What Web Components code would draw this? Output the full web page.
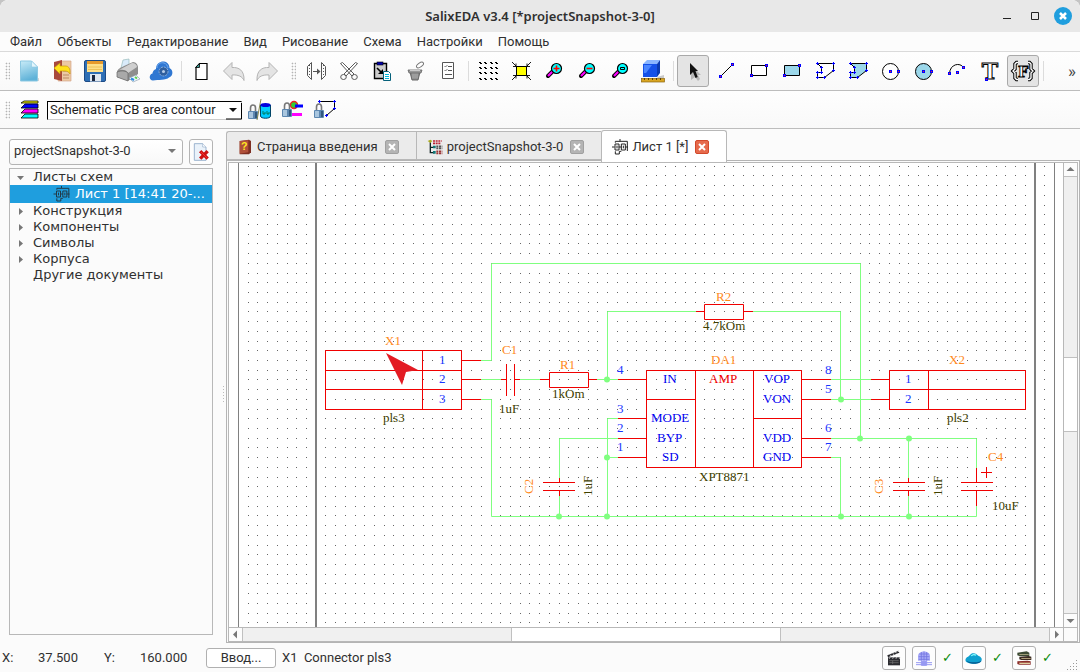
<!DOCTYPE html>
<html lang="ru">
<head>
<meta charset="utf-8">
<title>SalixEDA v3.4 [*projectSnapshot-3-0]</title>
<style>
html, body { height: 100%; margin: 0; }
body { background: #c4c4c4; font: 13px/16px Roboto, "Noto Sans", sans-serif; color: #303030; }
</style>
</head>
<body>
<script>
const define = (name, css, html, init) => {
  const tpl = document.createElement('template');
  tpl.innerHTML = `<style>*{box-sizing:border-box}button,select{font:inherit;color:inherit;margin:0}${css}</style>${html}`;
  customElements.define(name, class extends HTMLElement {
    connectedCallback() {
      if (this.shadowRoot) return;
      const root = this.attachShadow({ mode: 'open' });
      root.append(tpl.content.cloneNode(true));
      if (init) init.call(this, root);
    }
  });
};

/* ---------- icons, all on a 24 x 24 grid ---------- */
const node = (x, y) => `<rect x="${x - 1}" y="${y - 1}" width="3" height="3" fill="#00f"/><rect x="${x}" y="${y}" width="1" height="1" fill="#f22"/>`;
const dot = (x, y) => `<rect x="${x - 1}" y="${y}" width="3" height="1" fill="#00f"/><rect x="${x}" y="${y - 1}" width="1" height="3" fill="#00f"/>`;
const lock = (x, y) => `<path d="M${x + 2.5} ${y + 8}v-4a2.5 3 0 0 1 5 0v4" fill="none" stroke="#777" stroke-width="1.6"/><rect x="${x}" y="${y + 7}" width="10" height="8" rx="1" fill="#5d87b0"/><path d="M${x + 1} ${y + 8}h4v6h-4z" fill="#a9c6df"/><path d="M${x + 7} ${y + 8}h2v6h-2z" fill="#32587d"/>`;
const magnifier = inner => `<path d="M6 17l5-5" stroke="#000" stroke-width="4" stroke-linecap="round"/><path d="M6 17l5-5" stroke="#f0f" stroke-width="2.2"/><circle cx="14.5" cy="9.500" r="5" fill="#0ff" stroke="#000" stroke-width="1.200"/>${inner}`;
const polyPath = 'M4.500 4.500H20.500V11.500L11.500 18.500H4.500V13.500H8.500V8.500Z';
const polyNodes = dot(4, 4) + dot(20, 4) + dot(20, 11) + dot(11, 18) + dot(4, 18) + dot(4, 13) + dot(8, 13) + dot(8, 8);
const arrowBack = 'M1.500 12L10 3.500V8.500C17 8 22.500 11.500 22 21.500C20.500 17.500 16 15.500 10 16V20.500Z';
const braces = 'M7 3.500H5.500L4 5V10L2 12L4 14V19L5.500 20.500H7M17 3.500H18.500L20 5V10L22 12L20 14V19L18.500 20.500H17';
const icons = {
  new: `<defs><linearGradient id="n" x2="0.300" y2="1"><stop offset="0" stop-color="#c8ebf7"/><stop offset="1" stop-color="#5fb2d8"/></linearGradient></defs><path d="M5 22h17v-3z" fill="#bbb" opacity=".6"/><path d="M3.500 2h11l6 6v14h-17z" fill="url(#n)" stroke="#8cc8e2"/><path d="M14.500 2v6h6z" fill="#e4f6fc" stroke="#8cc8e2" stroke-width=".6"/>`,
  open: `<path d="M10 2h11v20H8z" fill="#ecc9a4" stroke="#d5a78c" stroke-width=".7"/><path d="M4 3l8-2v21l-8-2z" fill="#a8493c"/><path d="M13 12h6m-6 4h6m-6 3h6" stroke="#b98a66"/><path d="M4 9l6-5v3h6c2 0 4 2 4 5v3c-1-2-3-3-5-3h-5v3z" fill="#ffe21c" stroke="#c89a10" stroke-width=".7"/>`,
  save: `<rect x="1.500" y="1.500" width="21" height="21" rx="1.500" fill="#2f6fb5" stroke="#1d4b86"/><rect x="4" y="2" width="16" height="11" fill="#ffe08a"/><rect x="4" y="2" width="16" height="3" fill="#e79a2c"/><path d="M5 8h14m-14 2.500h14" stroke="#eec25a"/><rect x="7" y="15" width="11" height="7.500" fill="#dfe7f0"/><rect x="9" y="16" width="3" height="6" fill="#1a2740"/>`,
  print: `<path d="M5 9l2-8 6-1v8z" fill="#d9ebfa" stroke="#9bb" stroke-width=".7"/><path d="M1 13c0-3 5-5 7-6l9-4c3 0 5 3 5 5v7l-10 7L1 18z" fill="#8e8e8e"/><path d="M3 11l13-7c3 0 5 2 5 4l-9 6c-1-3-5-4-9-3z" fill="#cfcfcf"/><path d="M12 14v8L1 18v-5c5-2 9-1 11 1z" fill="#a9a9a9" stroke="#666" stroke-width=".7"/><path d="M13 19l7-3 4 4-7 3z" fill="#eef7fb" stroke="#89a" stroke-width=".6"/><path d="M15 19.500l3 1.500" stroke="#2c8be0" stroke-width="2"/><path d="M19 18l2 1.500" stroke="#5fd04a" stroke-width="2"/>`,
  cloud: `<path d="M4 21.500C0 21.500-.5 15.500 3.500 14.500C4 11 6 10.500 7 10C7 4 12 2 15 2.500C18.500 3 20.500 6 20.500 9C24.500 11 24.500 17 20 18.500C17 21.500 9 20.500 4 21.500Z" fill="#2f77d2"/><path d="M8 9c0-4 4-6 7-5 2 .5 4 3 4 5" fill="none" stroke="#6faaf0"/><circle cx="14.500" cy="12.500" r="4.500" fill="#2f5f9f" stroke="#8fb2dd" stroke-width="1" stroke-dasharray="2 1"/><circle cx="14.500" cy="12.500" r="1.500" fill="#b5cbe8"/>`,
  doc: `<path d="M10.500 4.500h7.500v16h-11v-12z" fill="#fff" stroke="#000" stroke-width="1.200"/><path d="M6.500 8.500h4v-4z" fill="#3c9a94" stroke="#000" stroke-width=".8"/>`,
  undo: `<path d="${arrowBack}" fill="#e4e4e4" stroke="#b4b4b4"/>`,
  redo: `<g transform="matrix(-1 0 0 1 24 0)"><path d="${arrowBack}" fill="#e4e4e4" stroke="#b4b4b4"/></g>`,
  pins: `<g fill="none" stroke="#555"><path d="M7.500 3.500v17M7.500 3.500l-4 4v9l4 4M17.500 3.500v17M17.500 3.500l4 4v9l-4 4"/><path d="M5.500 6v13M19.500 6v13" stroke-dasharray="1 2"/><path d="M9 12.500h5"/></g><path d="M13 9.500l3.500 3-3.500 3z" fill="#555"/>`,
  cut: `<g fill="none" stroke="#5a5a5a"><path d="M3.500 4.500L15 17l2-2L5.500 3.500zM20.500 4.500L9 17l-2-2L18.500 3.500z" fill="#fff"/><ellipse cx="6.500" cy="18" rx="2.800" ry="2.500"/><ellipse cx="17.500" cy="18" rx="2.800" ry="2.500"/></g>`,
  paste: `<path d="M4.500 4.500h12v15h-12z" fill="#ccc" stroke="#000" stroke-width="1.400"/><rect x="7" y="3" width="6" height="3" fill="#00a" stroke="#000" stroke-width=".6"/><path d="M7 9l5 5" stroke="#000" stroke-width="1.600"/><path d="M13 10v5H8z"/><path d="M13.500 12.500h5l2 2v7h-7z" fill="#fff" stroke="#05607a"/><path d="M15 15.500h4m-4 2h4m-4 2h4" stroke="#0bd"/>`,
  trash: `<path d="M7 13h10l-2 8H9z" fill="#8a8a8a" stroke="#666"/><path d="M5 11h14l-1 3H6z" fill="#999" stroke="#666" stroke-width=".8"/><path d="M7 11.500h10" stroke="#ccc"/><path d="M10 14.500v5m2-5v5m2-5v5" stroke="#bbb" stroke-width=".8"/><ellipse cx="17" cy="6" rx="4" ry="2" transform="rotate(-35 17 6)" fill="#fff" stroke="#777"/>`,
  list: `<path d="M6.500 3.500h11v16h-11z" fill="#fff" stroke="#555"/><path d="M12 7.500h4M12 11.500h4M9 15.500h7" stroke="#555"/><path d="M8.500 7l1 1 2-2M8.500 11l1 1 2-2" fill="none" stroke="#555" stroke-width=".8"/>`,
  grid: [3, 8, 13, 19].map(y => [4, 9, 15, 20].map(x => `<path d="M${x - 1} ${y}h2v1h1v1h-2v-1h-1z"/>`).join('')).join(''),
  fit: `<rect x="7.500" y="7.500" width="10" height="9" fill="#ff0" stroke="#000"/><path d="M3 3l4 4m-3 .5h3v-3M22 3l-4 4m3 .5h-3v-3M3 21l4-4m-3-.5h3v3M22 21l-4-4m3-.5h-3v3" fill="none" stroke="#000" stroke-width=".9"/>`,
  zoomin: magnifier('<path d="M11.500 9.500h6m-3-3v6" stroke="#f00" stroke-width="1.600"/>'),
  zoomout: magnifier('<path d="M11.500 9.500h6" stroke="#f00" stroke-width="1.600"/>'),
  zoomfit: magnifier('<path d="M12.500 8.500h4v2h-4z" fill="none" stroke="#000"/>'),
  cube: `<path d="M16 18l7-2v3h-6z" fill="#aaa" opacity=".6"/><path d="M2 5l4-4h13l-3 4z" fill="#8ab6ff"/><path d="M16 5l3-4v13l-3 4z" fill="#0b3bb0"/><rect x="2" y="5" width="14" height="13" fill="#1551e8"/><path d="M3 6h8l-6 8H3z" fill="#4a86ff"/><rect x=".5" y="19.500" width="23" height="3.500" fill="#d9a521" stroke="#8a6410" stroke-width=".7"/><path d="M3.500 19v2m4-2v2m4-2v2m4-2v2m4-2v2" stroke="#5c4208"/>`,
  select: `<path d="M10 6v15l4-3 3 4 2-2-2-4h3z" fill="#999" opacity=".6"/><path d="M9 4v12l3-3 2.500 6 2.200-1L14.500 12H17z" fill="#111"/>`,
  line: `<path d="M6.500 17.500l12-12" stroke="#000"/>${node(6, 17)}${node(18, 5)}`,
  rect: `<path d="M4.500 6.500h15v10h-15z" fill="#fff" stroke="#000"/>${node(4, 16)}${node(19, 6)}`,
  rectfill: `<path d="M4.500 6.500h15v10h-15z" fill="#9bd7ea" stroke="#000"/>${node(4, 16)}${node(19, 6)}`,
  poly: `<path d="${polyPath}" fill="#fff" stroke="#000"/>${polyNodes}`,
  polyfill: `<path d="${polyPath}" fill="#9bd7ea" stroke="#000"/>${polyNodes}`,
  circle: `<circle cx="11.500" cy="12.500" r="8" fill="#fff" stroke="#000"/>${node(11, 12)}${node(19, 12)}`,
  circlefill: `<circle cx="11.500" cy="12.500" r="8" fill="#9bd7ea" stroke="#000"/>${node(11, 12)}${node(19, 12)}`,
  arc: `<path d="M4.500 14.500C5 5 15 3 18.500 8.500" fill="none" stroke="#000"/>${node(4, 14)}${node(12, 13)}${node(18, 8)}`,
  text: `<text x="12" y="20" text-anchor="middle" font-family="DejaVu Serif, serif" font-weight="700" font-size="22" fill="#fff" stroke="#000">T</text>${node(8, 20)}`,
  field: `<path d="${braces}" fill="none" stroke="#000" stroke-width="3.400"/><path d="${braces}" fill="none" stroke="#fff" stroke-width="1.400"/><text x="12" y="18" text-anchor="middle" font-family="DejaVu Serif, serif" font-weight="700" font-size="15" fill="#fff" stroke="#000" stroke-width=".9">F</text>`,
  layers: `<g stroke="#000" stroke-width=".8"><path d="M4 20l4-4h13v4z" fill="#0ff"/><path d="M4 15l4-4h13v4z" fill="#f0f"/><path d="M4 10l4-4h13v4z" fill="#00f"/><path d="M4 5l3-2h14v2z" fill="#ff0"/></g>`,
  lockdata: `${lock(1, 6)}<path d="M10 22L14 1" stroke="#8a8a50"/><path d="M13.500 7v11c0 3 10 3 10 0v-11z" fill="#0cf" stroke="#046"/><ellipse cx="18.500" cy="7" rx="5" ry="2" fill="#00d"/><path d="M16 13v3h2v-2m2-1v3h2v-2" fill="none" stroke="#063" stroke-width=".8"/>`,
  locklayer: `<circle cx="14" cy="7" r="3.500" fill="#3c3" stroke="#e22" stroke-width="1.400"/><path d="M15 8h8" stroke="#00f" stroke-width="3"/><path d="M12 16.500h10" stroke="#f0f" stroke-width="3"/>${lock(2, 4)}`,
  lockpoly: `<path d="M6.500 3.500h15v7l-8 7" fill="none" stroke="#000"/>${dot(6, 3)}${dot(21, 3)}${dot(21, 10)}${dot(13, 17)}${lock(1, 5)}`,
  remove: `<path d="M4 2h10l4 4v16H4z" fill="#eaf2fa" stroke="#8ba7c6"/><path d="M14 2v4h4" fill="#fff" stroke="#8ba7c6" stroke-width=".7"/><path d="M11 11l9 9m0-9l-9 9" stroke="#c11" stroke-width="4"/><path d="M12 12l7 7" stroke="#f33"/>`,
  sheet: `<g fill="none" stroke="currentColor" stroke-width="1.500"><path d="M0 12h4m6 0h4m6 0h4M4.500 7.500h6v9h-6zM14 7.500h6v9h-6zM5 5.500V3.500h7V0M12 3.500h11V18M5 18.500v4h6v-4h3"/><path d="M7.500 10v4m9.500-4v4"/></g>`,
  book: `<path d="M4 3l14-2 3 2v17l-3 3H4z" fill="#7d2f22"/><path d="M4 3l13-1v18l-13 2z" fill="#b0503a"/><text x="11" y="17" text-anchor="middle" font-family="Liberation Sans, sans-serif" font-weight="700" font-size="16" fill="#ffe820">?</text>`,
  tree: `<g stroke-width="2.500" stroke-dasharray="3 1" fill="none"><path d="M9 3h13M9 6.500h12" stroke="#b23"/><path d="M14 11h9M14 14h9" stroke="#555"/><path d="M14 18.500h9M14 21.500h9" stroke="#933"/></g><path d="M5 5v15.500H11M5 12.500H11" fill="none" stroke="#122" stroke-width="2"/><path d="M1 3l4-2 3 2-3 3z" fill="#aa2"/><path d="M9 10h4v4H9zM9 18h4v4H9z" fill="#177"/>`,
  clapper: `<path d="M3 11h18v12H3z" fill="#2b2b30"/><path d="M2 8L19 1l1 3-17 7z" fill="#2b2b30"/><path d="M6 7l2 2m2-4l2 2m2-4l2 2m2-4l1 2M6 11l-1 2m6-2l-1 2m6-2l-1 2m6-2l-1 2" stroke="#ddd" stroke-width="1.500"/><path d="M5 16h14m-14 3h14M10 16v5" stroke="#777"/>`,
  globe: `<path d="M3 16V9c0-9 18-9 18 0v7z" fill="#a9abf8"/><path d="M4 10h16M12 2v14M5 6h14M4 14h16M8 3v13M16 3v13" stroke="#7476e0" stroke-width="1.200"/><path d="M0 19h24M0 22h24M8 17h8v6H8z" stroke="#9698f2" stroke-width="1.500" fill="#9698f2"/>`,
  cloudsm: `<path d="M3 19c-5-1-5-7 0-9 3-1 3-5 8-5 4 0 6 3 8 4 6 2 6 8 1 10-4 2-13 2-17 0z" fill="#0fa0cf"/><path d="M8 9c2-3 6-2 7-1" stroke="#8ff" stroke-width="2" fill="none"/><path d="M1 16c5 3 17 3 22 0-1 6-20 6-22 0z" fill="#055a90"/>`,
  books: `<path d="M2 17l15-1 5 1v5H5l-3-1z" fill="#8c2f2c"/><path d="M5 19h16v2H5z" fill="#e0cfa0"/><path d="M5 10l14-1 4 1v5H8l-3-1z" fill="#3a2a20"/><path d="M8 12h14v1H8z" fill="#e8d8a8"/><path d="M2 4l14-2 4 2v5H5L2 8z" fill="#3c4a34"/><path d="M5 6h14v1H5z" fill="#cfc79a"/>`
};
define('eda-icon', `:host{display:block;width:24px;height:24px;flex:none}svg{display:block;width:100%;height:100%;overflow:visible}`,
  `<svg viewBox="0 0 24 24" aria-hidden="true"></svg>`,
  function (root) { root.querySelector('svg').innerHTML = icons[this.getAttribute('name')]; });

/* ---------- window chrome ---------- */
define('title-bar', `
:host{display:grid;grid-template-columns:1fr auto 1fr;align-items:center;height:32px;flex:none;background:#e8e8e8;border-radius:8px 8px 0 0;box-sizing:border-box}
h1{grid-column:2;margin:0;font:600 13px/18px "Noto Sans",sans-serif;color:#303030}
div{display:flex;justify-content:flex-end;gap:8px;padding-right:8px}
button{width:20px;height:18px;padding:0;border:0;background:none;border-radius:9px}
button.close{width:18px;background:#1f9ede}
svg{display:block;width:100%;height:18px}`,
`<h1><slot></slot></h1><div>
<button aria-label="Свернуть"><svg viewBox="0 0 20 18"><path d="M5 11.500h8" stroke="#222"/></svg></button>
<button aria-label="Развернуть"><svg viewBox="0 0 20 18"><path d="M5.500 5.500h7v7h-7z" fill="none" stroke="#222"/></svg></button>
<button class="close" aria-label="Закрыть"><svg viewBox="0 0 18 18"><path d="M6 6l6 6m0-6l-6 6" stroke="#fff" stroke-width="2.500"/></svg></button></div>`);

define('menu-bar', `:host{display:flex;flex:none;height:20px;padding-left:3px;background:#fcfcfc;border-bottom:1px solid #dadada;box-sizing:border-box}
::slotted(menu-item){flex:none}`, `<slot></slot>`);
define('menu-item', `:host{display:block}button{height:19px;border:0;padding:0 8px 0 7px;background:none;line-height:19px}`, `<button><slot></slot></button>`);

define('tool-bar', `:host{display:flex;align-items:center;gap:1px;flex:none;height:39px;background:linear-gradient(#fefefe,#f9f9f9);border-bottom:1px solid #bdbdbd;box-sizing:border-box;overflow:hidden}:host([compact]){height:38px;padding-top:1px}`, `<slot></slot>`);
define('tool-button', `:host{display:block;flex:none}
button{display:grid;place-items:center;width:32px;height:32px;padding:0;border:1px solid transparent;border-radius:3px;background:none}
:host([pressed]) button{background:#e4e4e4;border-color:#a9a9a9}`, `<button></button>`,
  function (root) {
    const b = root.querySelector('button');
    b.setAttribute('aria-label', this.getAttribute('label'));
    const icon = document.createElement('eda-icon');
    icon.setAttribute('name', this.getAttribute('icon'));
    b.append(icon);
  });
define('tool-handle', `:host{display:block;flex:none;width:12px;padding-left:5px;box-sizing:border-box}:host([inner]){width:15px;padding-left:7px}
i{display:block;width:5px;height:18px;background:radial-gradient(circle,#b4b4b4 40%,transparent 50%) 0 0/3px 3px}`, `<i></i>`);
define('tool-sep', `:host{display:block;flex:none;width:6px;height:20px;box-sizing:border-box}i{display:block;width:1px;height:20px;margin-left:3px;background:#dcdcdc}`, `<i></i>`);
define('tool-more', `:host{display:block;margin-left:auto;padding-right:4px}button{border:0;background:none;padding:0;font-size:17px;line-height:20px;color:#444}`, `<button aria-label="Ещё">»</button>`);

define('layer-select', `
:host{display:block;position:relative;margin:0 0 0 5px;width:195px;flex:none}
select{display:block;appearance:none;width:100%;height:19px;border:1px solid;border-color:#000 #ccc #ccc #000;border-radius:0;background:#fff;padding:0 18px 0 2px;color:#222;line-height:16px}
svg{position:absolute;right:0;top:1px;width:16px;height:18px;pointer-events:none}`,
`<select aria-label="Слой"><option>Schematic PCB area contour</option><option>Schematic wire</option></select>
<svg viewBox="0 0 16 18"><path d="M0 17h15.500V1" fill="none" stroke="#000"/><path d="M3 6h8l-4 4z" fill="#111"/></svg>`);

/* ---------- project panel ---------- */
define('project-panel', `
:host{display:flex;flex-direction:column;gap:3px;width:226px;flex:none;padding:10px 13px 8px 9px;box-sizing:border-box}
.top{display:flex;gap:6px;height:26px}
label{position:relative;flex:1;display:block}
select{display:block;appearance:none;width:100%;height:26px;border:1px solid #b4b4b4;border-radius:3px;background:linear-gradient(#fff,#f8f8f8);padding:0 20px 2px 4px}
label svg{position:absolute;right:7px;top:10px;width:8px;height:5px;pointer-events:none}
button{width:24px;height:26px;padding:0;display:grid;place-items:center;border:1px solid #b4b4b4;border-radius:3px;background:#fdfdfd}
button eda-icon{width:20px;height:20px}
`, `<div class="top"><label><select aria-label="Проект"><option>projectSnapshot-3-0</option></select><svg viewBox="0 0 8 5"><path d="M0 0h8L4 4z" fill="#777"/></svg></label>
<button aria-label="Закрыть проект"><eda-icon name="remove"></eda-icon></button></div><slot></slot>`);

define('project-tree', `:host{display:block;flex:1;border:1px solid #b8b8b8;background:#fbfbfb;font:13px/16px "DejaVu Sans",sans-serif;box-sizing:border-box;overflow:hidden}`, `<slot></slot>`);
define('tree-row', `
:host{display:flex;align-items:center;height:16px;padding-left:23px;white-space:nowrap}
:host([leaf]){height:18px;padding-left:43px;background:#1f9ede;color:#fff}
svg{width:7px;height:7px;flex:none;margin:0 9px 0 -16px;display:none}
:host([open]) svg,:host([closed]) svg{display:block}
:host([closed]) svg{transform:rotate(-90deg)}
eda-icon{display:none;width:17px;height:16px;margin-right:5px;color:#223a48}:host([leaf]) eda-icon{display:block}`,
`<svg viewBox="0 0 7 7"><path d="M0 2h7L3.500 6z" fill="#777"/></svg><eda-icon name="sheet"></eda-icon><slot></slot>`);

/* ---------- document tabs ---------- */
define('doc-tabs', `:host{display:flex;align-items:flex-end;height:30px;flex:none}`, `<slot></slot>`);
define('doc-tab', `
:host{display:flex;align-items:center;gap:7px;height:29px;padding:2px 17px 0 10px;background:#ebebeb;border:1px solid #b8b8b8;border-width:1px 0 1px 1px;box-sizing:border-box;white-space:nowrap}
:host(:first-child){border-radius:3px 0 0 0}
:host([active]){height:32px;margin-bottom:-2px;padding-top:0;background:#fff;border-width:1px 1px 0 1px;border-radius:3px 3px 0 0;position:relative;z-index:1}
eda-icon{width:16px;height:16px;color:#222}
button{border:0;padding:0;background:none;line-height:16px}
.t{display:flex;align-items:center;gap:4px}
.x{width:14px;height:14px;border-radius:2px;background:#b4b4b4;border:1px solid #a0a0a0}
:host([active]) .x{background:#e66a4c;border-color:#d2492b}
.x svg{display:block}`,
`<button class="t"><slot></slot></button><button class="x" aria-label="Закрыть вкладку"><svg width="12" height="12" viewBox="0 0 12 12"><path d="M3 3l6 6m0-6L3 9" stroke="#fff" stroke-width="2"/></svg></button>`,
  function (root) {
    const icon = document.createElement('eda-icon');
    icon.setAttribute('name', this.getAttribute('icon'));
    root.querySelector('.t').prepend(icon);
  });

/* ---------- scroll bars ---------- */
define('scroll-bar', `
:host{display:flex;background:#fcfcfc;box-sizing:border-box;border-left:1px solid #b8b8b8}
:host([horizontal]){border-left:0;border-top:1px solid #b8b8b8}
:host([vertical]){flex-direction:column}
button{width:13px;height:13px;padding:0;border:0;background:none;flex:none;display:grid;place-items:center}
svg{width:9px;height:9px}
.track{flex:1;display:flex;background:#f0f0f0;border:1px solid #c0c0c0}
:host([vertical]) .track{flex-direction:column;border-width:1px 0}
:host([horizontal]) .track{border-width:0 1px}
.thumb{background:#fff;border:1px solid #c0c0c0}
:host([vertical]) .thumb{border-width:1px 0}
:host([horizontal]) .thumb{border-width:0 1px}`,
`<button class="a" aria-label="Назад"><svg viewBox="0 0 9 9"><path/></svg></button><div class="track"><div class="before"></div><div class="thumb"></div><div class="after"></div></div><button class="b" aria-label="Вперёд"><svg viewBox="0 0 9 9"><path/></svg></button>`,
  function (root) {
    const v = this.hasAttribute('vertical');
    const [a, b] = root.querySelectorAll('path');
    a.setAttribute('d', v ? 'M0.500 6h8L4.500 2z' : 'M6 0.500v8L2 4.500z');
    b.setAttribute('d', v ? 'M0.500 3h8L4.500 7z' : 'M3 0.500v8L7 4.500z');
    [a, b].forEach(p => p.setAttribute('fill', '#777'));
    const parts = this.getAttribute('parts').split(' ');
    ['before', 'thumb', 'after'].forEach((c, i) => root.querySelector('.' + c).style.flex = parts[i] + ' 1 0');
  });

/* ---------- schematic ---------- */
const GRID = 9.715;
const wires = [
  'M481 360.500H491.500V263.500H860.500V438', 'M481 379.500H501M520 379.500H540M597 379.500H618',
  'M481 399.500H491.500V516.500H976.500V506', 'M607.500 379V311.500H696M753 311.500H840.500V399',
  'M618 418.500H607.500V516M618 457.500H607', 'M618 438.500H559.500V478M559.500 496V516',
  'M831 379.500H871M831 399.500H871', 'M831 438.500H976.500V468', 'M831 457.500H840.500V516',
  'M908.500 438V478M908.500 496V516'
];
const parts = [
  'M325.500 350.500H461.500V409.500H325.500ZM422.500 350V409M325 370.500H461M325 389.500H461M461 360.500H481M461 379.500H481M461 399.500H481',
  'M501 379.500H506M506.500 364V396M514.500 364V396M514 379.500H520',
  'M540 379.500H549M549.500 372.500H588.500V387.500H549.500ZM588 379.500H597',
  'M696 311.500H704M704.500 304.500H743.500V319.500H704.500ZM743 311.500H753',
  'M646.500 370.500H801.500V467.500H646.500ZM695.500 370V467M753.500 370V467M646 399.500H695M753 418.500H801',
  'M618 379.500H646M618 418.500H646M618 438.500H646M618 457.500H646M801 379.500H831M801 399.500H831M801 438.500H831M801 457.500H831',
  'M559.500 478V482M543 482.500H575M543 490.500H575M559.500 490V496',
  'M871 379.500H889M871 399.500H889M889.500 370.500H1025.500V409.500H889.500ZM928.500 370V409M889 389.500H1025',
  'M908.500 478V482M893 482.500H925M893 490.500H925M908.500 490V496',
  'M976.500 468V482M961 482.500H993M961 490.500H993M976.500 490V506M981 472.500H992M986.500 467V478'
];
const joints = [[607, 379], [841, 399], [607, 457], [860, 438], [909, 438], [559, 516], [607, 516], [841, 516], [909, 516]];
const labels = {
  '#ff8a1c': [['X1', 385, 345], ['C1', 502, 354], ['R1', 560, 369], ['R2', 716, 301], ['DA1', 711, 364], ['X2', 949, 364], ['C4', 988, 461], ['C2', 533, 494, 1], ['C3', 883, 494, 1]],
  '#404000': [['pls3', 383, 422], ['1uF', 499, 413], ['1kOm', 552, 398], ['4.7kOm', 703, 330], ['XPT8871', 699, 481], ['pls2', 947, 422], ['10uF', 992, 510], ['1uF', 592, 496, 1], ['1uF', 942, 496, 1]],
  '#0000f0': [['IN', 663, 383], ['MODE', 651, 422], ['BYP', 657, 442], ['SD', 662, 461], ['VOP', 764, 383], ['VON', 763, 403], ['VDD', 763, 442], ['GND', 763, 461]],
  '#1a36ff': [['1', 439, 364], ['2', 439, 383], ['3', 439, 403], ['4', 617, 374], ['3', 617, 413], ['2', 617, 432], ['1', 617, 451], ['8', 825, 374], ['5', 825, 393], ['6', 825, 432], ['7', 825, 451], ['1', 905, 383], ['2', 905, 403]],
  '#f00000': [['AMP', 709, 383]]
};
define('schematic-sheet', `:host{display:block;overflow:hidden;background:#fff;min-width:0;min-height:0}
svg{display:block;width:834px;height:464px;overflow:visible}
text{font:13px "Liberation Serif",serif}`,
`<svg viewBox="229 163 834 464" role="img" aria-label="Схема"></svg>`,
  function (root) {
    let dots = '';
    for (let j = 0; j < 48; j++) {
      for (let i = 0; i < 83; i++) {
        const x = Math.floor(248.2 + i * GRID), y = Math.floor(166.25 + j * GRID);
        if (x >= 314 && x <= 317 || x >= 1033 && x <= 1036) continue;
        dots += `M${x} ${y}h1v1h-1z`;
      }
    }
    let s = `<g fill="#808080"><path d="M238 163h1v600h-1zM315 163h2v600h-2zM1034 163h2v600h-2zM1054 163h1v600h-1z"/></g><path d="${dots}" fill="#666"/>`;
    s += `<path d="${wires.join('')}" fill="none" stroke="#80ff80"/>`;
    s += `<path d="${parts.join('')}" fill="none" stroke="#f00000"/>`;
    s += joints.map(([x, y]) => `<circle cx="${x}" cy="${y + .5}" r="3" fill="#80ff80"/>`).join('');
    for (const color in labels)
      s += `<g fill="${color}">` + labels[color].map(([t, x, y, up]) => up ? `<text transform="translate(${x} ${y}) rotate(-90)">${t}</text>` : `<text x="${x}" y="${y}">${t}</text>`).join('') + '</g>';
    s += '<path d="M386 353L418 370L406 372L402 385Z" fill="#e31b23"/>';
    root.querySelector('svg').innerHTML = s;
  });

define('doc-frame', `
:host{display:grid;flex:1;min-height:0;border:1px solid #b4b4b4;padding:1px 1px 0;box-sizing:border-box;background:#fbfbfb}
.inner{display:grid;grid-template:minmax(0,1fr) 14px/minmax(0,1fr) 14px;border:1px solid #b8b8b8;min-height:0;min-width:0}
.corner{border:1px solid #b8b8b8;border-width:1px 0 0 1px}`,
`<div class="inner"><slot></slot><scroll-bar vertical parts="181 74 182"></scroll-bar><scroll-bar horizontal parts="269 270 269"></scroll-bar><div class="corner"></div></div>`);

define('split-handle', `:host{display:block;position:absolute;left:-3px;top:50%;width:1px;height:18px;background:linear-gradient(#bbb 1px,transparent 1px) 0 0/1px 3px repeat-y}`, ``);
define('work-area', `:host{display:flex;flex:1;min-height:0;background:#fbfbfb}section{position:relative;flex:1;display:flex;flex-direction:column;min-width:0;padding-top:1px}`,
  `<slot name="side"></slot><section><split-handle></split-handle><slot></slot></section>`);

/* ---------- status bar ---------- */
define('status-bar', `
:host{display:flex;align-items:center;height:29px;flex:none;padding:1px 0 0 2px;background:#fbfbfb;box-sizing:border-box}
dl{display:flex;margin:0}dt{width:24px}dd{margin:0;width:78px;padding-left:12px}
.enter{width:70px;height:20px;border:1px solid #b0b0b0;border-radius:3px;background:#fff;padding:0}
output{flex:1;padding-left:6px;white-space:pre}
.set{display:flex;align-items:center}
.set button{width:24px;height:24px;padding:0;display:grid;place-items:center;border:1px solid #b0b0b0;border-radius:3px;background:#fdfdfd}
.set button+button{margin-left:6px}
.set eda-icon{width:16px;height:16px}
.ok{width:26px;text-align:center;padding-right:3px;color:#0a8a0a;font:700 13px/16px "DejaVu Sans",sans-serif}
.grip{width:18px;height:24px;align-self:flex-end}`,
`<dl><dt>X:</dt><dd>37.500</dd><dt>Y:</dt><dd>160.000</dd></dl><button class="enter">Ввод...</button><output>X1  Connector pls3</output>
<div class="set"><button aria-label="Запись"><eda-icon name="clapper"></eda-icon></button><button aria-label="Сеть"><eda-icon name="globe"></eda-icon></button><span class="ok">✓</span>
<button aria-label="Облако"><eda-icon name="cloudsm"></eda-icon></button><span class="ok">✓</span>
<button aria-label="Библиотека"><eda-icon name="books"></eda-icon></button><span class="ok">✓</span></div>
<svg class="grip" viewBox="3 0 18 24"><path d="M17 12h1v1h-1zM14 15h1v1h-1zM17 15h1v1h-1zM11 18h1v1h-1zM14 18h1v1h-1zM17 18h1v1h-1zM8 21h1v1h-1zM11 21h1v1h-1zM14 21h1v1h-1zM17 21h1v1h-1z" fill="#999"/></svg>`);

define('eda-window', `:host{display:flex;flex-direction:column;height:100vh;overflow:hidden;border-radius:8px 8px 0 0;background:#fbfbfb}`, `<slot></slot>`);

/* ---------- application ---------- */
const tool = (icon, label, pressed) => `<tool-button icon="${icon}" label="${label}"${pressed ? ' pressed' : ''}></tool-button>`;
define('eda-app', `:host{display:block}tool-bar>eda-icon{margin-left:4px}`, `
<eda-window>
<title-bar>SalixEDA v3.4 [*projectSnapshot-3-0]</title-bar>
<menu-bar>${['Файл', 'Объекты', 'Редактирование', 'Вид', 'Рисование', 'Схема', 'Настройки', 'Помощь'].map(t => `<menu-item>${t}</menu-item>`).join('')}</menu-bar>
<tool-bar><tool-handle></tool-handle>
${tool('new', 'Новый')}${tool('open', 'Открыть')}${tool('save', 'Сохранить')}${tool('print', 'Печать')}${tool('cloud', 'Облако')}<tool-sep></tool-sep>
${tool('doc', 'Документ')}${tool('undo', 'Отменить')}${tool('redo', 'Повторить')}<tool-handle inner></tool-handle>
${tool('pins', 'Выводы')}${tool('cut', 'Вырезать')}${tool('paste', 'Вставить')}${tool('trash', 'Удалить')}${tool('list', 'Свойства')}<tool-sep></tool-sep>
${tool('grid', 'Сетка')}${tool('fit', 'Вписать')}${tool('zoomin', 'Увеличить')}${tool('zoomout', 'Уменьшить')}${tool('zoomfit', 'Окно')}${tool('cube', '3D')}<tool-sep></tool-sep>
${tool('select', 'Выбор', 1)}${tool('line', 'Линия')}${tool('rect', 'Прямоугольник')}${tool('rectfill', 'Заливка')}${tool('poly', 'Полигон')}${tool('polyfill', 'Полигон с заливкой')}${tool('circle', 'Круг')}${tool('circlefill', 'Круг с заливкой')}${tool('arc', 'Дуга')}${tool('text', 'Текст')}${tool('field', 'Поле', 1)}<tool-sep></tool-sep><tool-more></tool-more></tool-bar>
<tool-bar compact><tool-handle></tool-handle>
<eda-icon name="layers"></eda-icon><layer-select></layer-select>${tool('lockdata', 'Блокировка данных')}${tool('locklayer', 'Блокировка слоя')}${tool('lockpoly', 'Блокировка контура')}</tool-bar>
<work-area>
<project-panel slot="side"><project-tree>
<tree-row open>Листы схем</tree-row><tree-row leaf>Лист 1 [14:41 20-...</tree-row><tree-row closed>Конструкция</tree-row><tree-row closed>Компоненты</tree-row><tree-row closed>Символы</tree-row><tree-row closed>Корпуса</tree-row><tree-row>Другие документы</tree-row>
</project-tree></project-panel>
<doc-tabs><doc-tab icon="book">Страница введения</doc-tab><doc-tab icon="tree">projectSnapshot-3-0</doc-tab><doc-tab icon="sheet" active>Лист 1 [*]</doc-tab></doc-tabs>
<doc-frame><schematic-sheet></schematic-sheet></doc-frame>
</work-area>
<status-bar></status-bar>
</eda-window>`);
</script>
<eda-app></eda-app>
</body>
</html>
